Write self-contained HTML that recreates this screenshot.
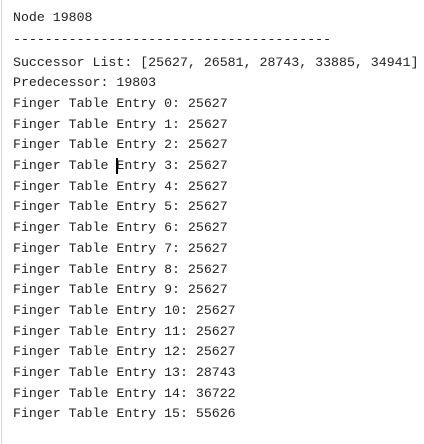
<!DOCTYPE html>
<html><head><meta charset="utf-8"><style>
html,body{margin:0;padding:0;background:#fff;width:424px;height:444px;overflow:hidden}
.b{position:absolute;left:1px;top:0;width:1px;height:444px;background:#d8d8d8}
.t{position:absolute;left:13px;margin:0;font-family:"Liberation Mono",monospace;font-size:13.25px;line-height:20.7px;color:#222;white-space:pre}
.cur{position:absolute;left:116px;top:158px;width:1.5px;height:16px;background:#000}
</style></head><body>
<div class="b"></div>
<div class="t" style="top:8px">Node 19808</div>
<div class="t" style="top:30px">----------------------------------------</div>
<pre class="t" style="top:52.5px">Successor List: [25627, 26581, 28743, 33885, 34941]
Predecessor: 19803
Finger Table Entry 0: 25627
Finger Table Entry 1: 25627
Finger Table Entry 2: 25627
Finger Table Entry 3: 25627
Finger Table Entry 4: 25627
Finger Table Entry 5: 25627
Finger Table Entry 6: 25627
Finger Table Entry 7: 25627
Finger Table Entry 8: 25627
Finger Table Entry 9: 25627
Finger Table Entry 10: 25627
Finger Table Entry 11: 25627
Finger Table Entry 12: 25627
Finger Table Entry 13: 28743
Finger Table Entry 14: 36722
Finger Table Entry 15: 55626</pre>
<div class="cur"></div>
</body></html>
